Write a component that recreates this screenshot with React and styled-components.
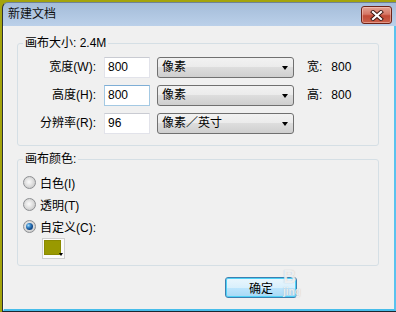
import React from "react";
import styled, { createGlobalStyle, css } from "styled-components";

const GlobalStyle = createGlobalStyle`
  html, body {
    margin: 0;
    padding: 0;
  }
  body {
    background: #a4a40c;
    font-family: "Liberation Sans", "Noto Sans CJK SC", sans-serif;
    font-size: 12px;
    color: #000;
    overflow: hidden;
  }
`;

const Window = styled.div`
  position: relative;
  margin: 2px 0 0 2px;
  width: 394px;
  height: 310px;
  box-sizing: border-box;
  display: flex;
  flex-direction: column;
  border-left: 1px solid #2b3038;
  border-top: 1px solid #6f8298;
  border-bottom: 1px solid #1c262e;
  border-top-left-radius: 6px;
  background: linear-gradient(#a4bcd9, #bcd1ea 24px);
`;

const TitleBar = styled.div`
  height: 23px;
  display: flex;
  align-items: flex-start;
  padding-left: 5px;
  flex-shrink: 0;
`;

const Title = styled.span`
  font-family: "Noto Sans CJK SC", sans-serif;
  font-size: 12px;
  line-height: 20px;
  color: #101010;
`;

const CloseButton = styled.div`
  margin: 3px 4px 0 auto;
  width: 31px;
  height: 18px;
  box-sizing: border-box;
  border: 1px solid #6e2318;
  border-radius: 3px;
  background: linear-gradient(#e3a293 0%, #d67766 45%, #c24a36 55%, #c9614b 100%);
  box-shadow: inset 0 0 0 1px rgba(255, 220, 210, 0.45);
  display: flex;
  align-items: center;
  justify-content: center;
`;

const Client = styled.div`
  flex: 1;
  background: #f0f0f0;
  border-left: 1px solid #fafafa;
  border-right: 2px solid #5ac2ee;
  border-bottom: 2px solid #47bdea;
  padding-top: 10px;
  display: flex;
  flex-direction: column;
`;

const Group = styled.fieldset`
  margin: ${(p) => p.$mt}px 15px 0 13px;
  padding: ${(p) => p.$pt}px 0 ${(p) => p.$pb}px 0;
  border: 1px solid #d5dfe5;
  border-radius: 3px;
  min-width: 0;
`;

const Legend = styled.legend`
  margin-left: 5px;
  padding: 0 2px;
  font-size: 12px;
  line-height: 15px;
`;

const FieldRow = styled.div`
  display: flex;
  align-items: center;
  height: 21px;
  & + & {
    margin-top: 7px;
  }
`;

const FieldLabel = styled.span`
  width: 78px;
  text-align: right;
  line-height: 21px;
`;

const TextBox = styled.div`
  margin-left: 8px;
  width: 46px;
  height: 21px;
  box-sizing: border-box;
  background: #fff;
  border: 1px solid #e2e3ea;
  border-top-color: #c9cbd2;
  padding-left: 3px;
  line-height: 19px;
  ${(p) =>
    p.$focused &&
    css`
      border-color: #a4c9e3;
      border-top-color: #7eaed6;
    `}
`;

const Combo = styled.div`
  margin-left: 7px;
  width: 137px;
  height: 21px;
  box-sizing: border-box;
  border: 1px solid #707070;
  border-radius: 3px;
  background: linear-gradient(#f2f2f2 0%, #ebebeb 50%, #dddddd 50%, #cfcfcf 100%);
  display: flex;
  align-items: center;
  padding: 0 5px 0 4px;
`;

const ComboText = styled.span`
  flex: 1;
  line-height: 19px;
`;

const Arrow = styled.span`
  width: 0;
  height: 0;
  border-left: 3.5px solid transparent;
  border-right: 3.5px solid transparent;
  border-top: 4px solid #000;
`;

const Result = styled.span`
  margin-left: 13px;
  line-height: 21px;
`;

const ResultValue = styled.span`
  margin-left: 9px;
`;

const RadioRow = styled.div`
  display: flex;
  align-items: center;
  height: 22px;
  padding-left: 5px;
  gap: 4px;
`;

const RadioCircle = styled.span`
  width: 13px;
  height: 13px;
  box-sizing: border-box;
  border-radius: 50%;
  border: 1px solid #8d8f92;
  background: radial-gradient(circle at 45% 45%, #fbfbfb 0, #e6e6e6 3px, #cfcfcf 6px);
  display: flex;
  align-items: center;
  justify-content: center;
`;

const RadioDot = styled.span`
  width: 7px;
  height: 7px;
  border-radius: 50%;
  background: radial-gradient(circle at 35% 35%, #a8dcfa 0, #3b88c9 2px, #124a8a 4px);
`;

const Swatch = styled.div`
  position: relative;
  margin: 1px 0 0 24px;
  width: 23px;
  height: 21px;
  box-sizing: border-box;
  border: 1px solid #cfcfcf;
  background: #fbfbfb;
  padding: 1px 3px 3px 1px;
`;

const SwatchFill = styled.div`
  width: 100%;
  height: 100%;
  box-sizing: border-box;
  background: #999900;
  border: 1px solid #8a8a00;
`;

const SwatchArrow = styled.span`
  position: absolute;
  right: 1px;
  bottom: 2px;
  width: 0;
  height: 0;
  border-left: 2.5px solid transparent;
  border-right: 2.5px solid transparent;
  border-top: 3px solid #000;
`;

const ButtonBar = styled.div`
  display: flex;
  padding: 11px 0 0 221px;
`;

const OkButton = styled.div`
  width: 72px;
  height: 21px;
  box-sizing: border-box;
  border: 1px solid #3c7fb1;
  border-radius: 3px;
  background: linear-gradient(#eaf6fd 0%, #d9f0fc 50%, #bee6fd 50%, #a7d9f5 100%);
  box-shadow: inset 0 0 0 1px #4fd2f6;
  text-align: center;
  font-family: "Noto Sans CJK SC", sans-serif;
  line-height: 19px;
`;

const Watermark = styled.div`
  position: absolute;
  left: 280px;
  top: 265px;
  display: flex;
  flex-direction: column;
  color: rgba(255, 255, 255, 0.75);
  text-shadow: 0 0 1px rgba(150, 160, 170, 0.7);
  font-family: "Liberation Sans", sans-serif;
  font-weight: bold;
  line-height: 1;
`;

const WmBig = styled.span`
  font-size: 18px;
`;

const WmSmall = styled.span`
  font-size: 10px;
  margin-top: 1px;
`;

const sizeRows = [
  { label: "宽度(W):", value: "800", unit: "像素", result: ["宽:", "800"] },
  { label: "高度(H):", value: "800", unit: "像素", result: ["高:", "800"], focused: true },
  { label: "分辨率(R):", value: "96", unit: "像素／英寸" },
];

const colorOptions = [
  { label: "白色(I)" },
  { label: "透明(T)" },
  { label: "自定义(C):", checked: true },
];

export default function App() {
  return (
    <>
      <GlobalStyle />
      <Window>
        <TitleBar>
          <Title>新建文档</Title>
          <CloseButton>
            <svg width="14" height="11" viewBox="0 0 14 11">
              <path d="M3 2 L11 9 M11 2 L3 9" stroke="#3a1510" strokeWidth="4" strokeLinecap="square" />
              <path d="M3 2 L11 9 M11 2 L3 9" stroke="#ffffff" strokeWidth="2.2" strokeLinecap="square" />
            </svg>
          </CloseButton>
        </TitleBar>
        <Client>
          <Group $mt={0} $pt={6} $pb={11}>
            <Legend>画布大小: 2.4M</Legend>
            {sizeRows.map((r) => (
              <FieldRow key={r.label}>
                <FieldLabel>{r.label}</FieldLabel>
                <TextBox $focused={r.focused}>{r.value}</TextBox>
                <Combo>
                  <ComboText>{r.unit}</ComboText>
                  <Arrow />
                </Combo>
                {r.result && (
                  <Result>
                    {r.result[0]}
                    <ResultValue>{r.result[1]}</ResultValue>
                  </Result>
                )}
              </FieldRow>
            ))}
          </Group>
          <Group $mt={6} $pt={4} $pb={6}>
            <Legend>画布颜色:</Legend>
            {colorOptions.map((o) => (
              <RadioRow key={o.label}>
                <RadioCircle>{o.checked && <RadioDot />}</RadioCircle>
                <span>{o.label}</span>
              </RadioRow>
            ))}
            <Swatch>
              <SwatchFill />
              <SwatchArrow />
            </Swatch>
          </Group>
          <ButtonBar>
            <OkButton>确定</OkButton>
          </ButtonBar>
        </Client>
        <Watermark>
          <WmBig>B</WmBig>
          <WmSmall>jing</WmSmall>
        </Watermark>
      </Window>
    </>
  );
}
